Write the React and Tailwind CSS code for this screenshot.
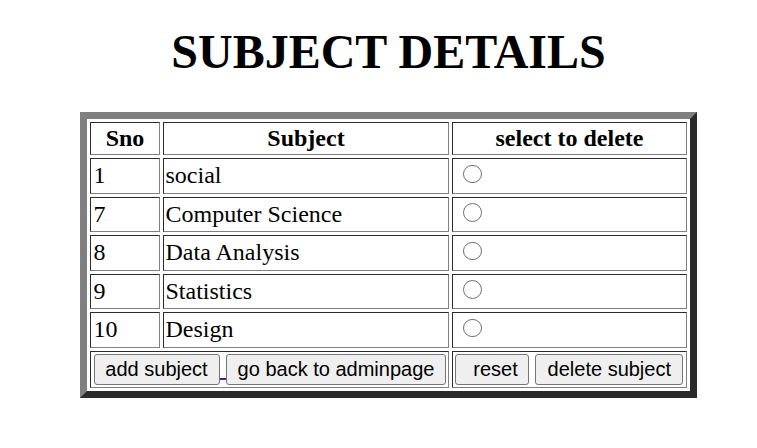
import React from "react";

const rows = [
  ["1", "social"],
  ["7", "Computer Science"],
  ["8", "Data Analysis"],
  ["9", "Statistics"],
  ["10", "Design"],
];

const cell =
  "border border-t-[#2b2b2b] border-l-[#2b2b2b] border-r-[#808080] border-b-[#808080] px-[1.5px] py-[1.5px] align-middle";

const btn =
  "h-[31.5px] border border-[#767676] rounded-[3px] bg-[#efefef] text-black text-[20px] leading-[23px] flex items-center justify-center whitespace-nowrap";

export default function App() {
  return (
    <div
      className="w-[757px] h-[448px] bg-white flex flex-col items-center pl-[20px]"
      style={{ fontFamily: '"Liberation Serif", "Times New Roman", serif' }}
    >
      <h1 className="mt-[25px] text-[48px] leading-[53px] font-bold text-black">
        SUBJECT DETAILS
      </h1>
      <table className="mt-[34px] border-separate border-spacing-[3px] border-[7.5px] border-t-[#808080] border-l-[#808080] border-r-[#2b2b2b] border-b-[#2b2b2b] text-[24px] leading-[27px] text-black">
        <tbody>
          <tr className="h-[33px]">
            <th className={`${cell} w-[70px] font-bold text-center`}>Sno</th>
            <th className={`${cell} w-[286px] font-bold text-center`}>Subject</th>
            <th className={`${cell} w-[235px] font-bold text-center`}>
              select to delete
            </th>
          </tr>
          {rows.map(([n, s]) => (
            <tr key={n} className="h-[35.5px]">
              <td className={`${cell} pl-[2.5px]`}>{n}</td>
              <td className={cell}>{s}</td>
              <td className={cell}>
                <span className="block w-[18.5px] h-[18.5px] rounded-full border-[1.5px] border-[#707070] ml-[8.5px] mb-[4px] bg-white" />
              </td>
            </tr>
          ))}
          <tr className="h-[37.5px]">
            <td className={cell} colSpan={2}>
              <div
                className="flex items-start"
                style={{ fontFamily: '"Liberation Sans", Arial, sans-serif' }}
              >
                <button className={`${btn} w-[126px] ml-[1px]`}>add subject</button>
                <span className="w-[6.5px] h-[1.5px] bg-[#551a8b] mt-[24.5px]" />
                <button className={`${btn} w-[220px]`}>go back to adminpage</button>
              </div>
            </td>
            <td className={cell}>
              <div
                className="flex items-start"
                style={{ fontFamily: '"Liberation Sans", Arial, sans-serif' }}
              >
                <button className={`${btn} w-[74px] pl-[7px] ml-[0.5px]`}>reset</button>
                <span className="w-[6.3px]" />
                <button className={`${btn} w-[148px]`}>delete subject</button>
              </div>
            </td>
          </tr>
        </tbody>
      </table>
    </div>
  );
}
